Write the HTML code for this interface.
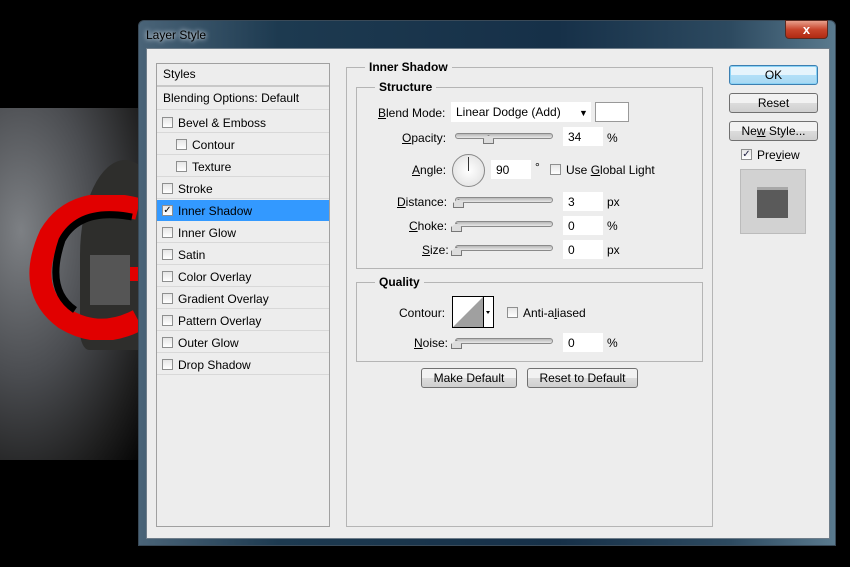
<!DOCTYPE html><html><head><style>
*{margin:0;padding:0;box-sizing:border-box}
body{width:850px;height:567px;overflow:hidden;background:#000;font-family:"Liberation Sans",sans-serif;font-size:12px;color:#000;position:relative}
.a{position:absolute}
.t{position:absolute;white-space:nowrap;line-height:14px}
.cb{position:absolute;width:11px;height:11px;border:1px solid #8e8f8f;background:linear-gradient(#e6e6e6,#fff)}
.row{position:absolute;left:157px;width:172px;height:22px;border-bottom:1px solid #d8d8d8}
.box{position:absolute;border:1px solid #b5b5b5}
.inp{position:absolute;background:#fff;height:19px;padding:3px 0 0 5px}
.sl{position:absolute;height:6px;width:98px;border:1px solid #8a8a8a;border-radius:3px;background:linear-gradient(#b8b8b8,#e8e8e8)}
.th{position:absolute;width:11px;height:9px;background:#ddd;border:1px solid #777;clip-path:polygon(50% 0,100% 45%,100% 100%,0 100%,0 45%)}
.btn{position:absolute;height:20px;border:1px solid #707070;border-radius:3px;background:linear-gradient(#f2f2f2 50%,#dcdcdc 50%,#cfcfcf);text-align:center;line-height:18px}
u{text-decoration:underline}
</style></head><body>
<div class="a" style="left:0;top:108px;width:140px;height:352px;background:radial-gradient(ellipse at 15% 35%,#7d8084,#4a4c50 45%,#1e1e1e 80%,#050505)"></div>
<div class="a" style="left:80px;top:160px;width:90px;height:190px;border-radius:50% 50% 10% 10%;background:#2e2e2c"></div>
<svg class="a" style="left:20px;top:195px" width="120" height="145"><path d="M118 14 Q55 -2 30 40 Q5 95 45 124 Q80 145 118 125" fill="none" stroke="#e10000" stroke-width="22"/><path d="M112 22 Q60 12 42 45 Q25 95 55 115" fill="none" stroke="#000" stroke-width="7"/><rect x="100" y="72" width="20" height="14" fill="#e10000"/><rect x="70" y="60" width="40" height="50" fill="#555"/></svg>
<div class="a" style="left:138px;top:20px;width:698px;height:526px;border:1px solid #3a4a58;border-radius:6px 6px 0 0;background:linear-gradient(90deg,#4a6478 0%,#1d3a50 20%,#163048 60%,#2d4a60 85%,#5a7a8e 100%)"></div>
<div class="t" style="left:146px;top:28px;color:#000;text-shadow:0 0 6px #cfd8e0,0 0 4px #cfd8e0">Layer Style</div>
<div class="a" style="left:785px;top:20px;width:43px;height:19px;border-radius:0 0 4px 4px;background:linear-gradient(#e8a08c,#c8452c 50%,#b02a12);border:1px solid #5a2a20;color:#fff;font-weight:bold;text-align:center;line-height:17px;font-size:13px">x</div>
<div class="a" style="left:146px;top:48px;width:684px;height:491px;background:#ededed;border:1px solid #6e7d8a"></div>
<div class="a" style="left:156px;top:63px;width:174px;height:464px;border:1px solid #a0a0a0;background:#ededed"></div>
<div class="row" style="top:64px;height:23px;border-bottom:2px solid #c8c8c8"></div><div class="t" style="left:163px;top:67px">Styles</div>
<div class="row" style="top:88px"></div><div class="t" style="left:163px;top:91px">Blending Options: Default</div>
<div class="a" style="left:157px;top:200px;width:172px;height:21px;background:#3399ff"></div>
<div class="row" style="top:111px"></div><div class="cb" style="left:162px;top:117px"></div><div class="t" style="left:178px;top:116px">Bevel &amp; Emboss</div>
<div class="row" style="top:133px"></div><div class="cb" style="left:176px;top:139px"></div><div class="t" style="left:192px;top:138px">Contour</div>
<div class="row" style="top:155px"></div><div class="cb" style="left:176px;top:161px"></div><div class="t" style="left:192px;top:160px">Texture</div>
<div class="row" style="top:177px"></div><div class="cb" style="left:162px;top:183px"></div><div class="t" style="left:178px;top:182px">Stroke</div>
<div class="cb" style="left:162px;top:205px;text-align:center;font-size:10px;line-height:9px">✓</div><div class="t" style="left:178px;top:204px">Inner Shadow</div>
<div class="row" style="top:221px"></div><div class="cb" style="left:162px;top:227px"></div><div class="t" style="left:178px;top:226px">Inner Glow</div>
<div class="row" style="top:243px"></div><div class="cb" style="left:162px;top:249px"></div><div class="t" style="left:178px;top:248px">Satin</div>
<div class="row" style="top:265px"></div><div class="cb" style="left:162px;top:271px"></div><div class="t" style="left:178px;top:270px">Color Overlay</div>
<div class="row" style="top:287px"></div><div class="cb" style="left:162px;top:293px"></div><div class="t" style="left:178px;top:292px">Gradient Overlay</div>
<div class="row" style="top:309px"></div><div class="cb" style="left:162px;top:315px"></div><div class="t" style="left:178px;top:314px">Pattern Overlay</div>
<div class="row" style="top:331px"></div><div class="cb" style="left:162px;top:337px"></div><div class="t" style="left:178px;top:336px">Outer Glow</div>
<div class="row" style="top:353px"></div><div class="cb" style="left:162px;top:359px"></div><div class="t" style="left:178px;top:358px">Drop Shadow</div>
<div class="box" style="left:346px;top:67px;width:367px;height:460px"></div>
<div class="t" style="left:365px;top:60px;background:#ededed;padding:0 4px;font-weight:bold">Inner Shadow</div>
<div class="box" style="left:356px;top:87px;width:347px;height:182px"></div>
<div class="t" style="left:375px;top:80px;background:#ededed;padding:0 4px;font-weight:bold">Structure</div>
<div class="t" style="left:378px;top:106px"><u>B</u>lend Mode:</div>
<div class="inp" style="left:451px;top:102px;width:140px;height:20px">Linear Dodge (Add)</div><div class="t" style="left:579px;top:106px;font-size:9px">▼</div>
<div class="a" style="left:595px;top:102px;width:34px;height:20px;background:#fff;border:1px solid #999"></div>
<div class="t" style="left:402px;top:131px"><u>O</u>pacity:</div><div class="sl" style="left:455px;top:133px"></div><div class="th" style="left:483px;top:135px"></div>
<div class="inp" style="left:563px;top:127px;width:40px">34</div><div class="t" style="left:607px;top:131px">%</div>
<div class="t" style="left:412px;top:163px"><u>A</u>ngle:</div>
<div class="a" style="left:452px;top:154px;width:33px;height:33px;border-radius:50%;border:1px solid #888;background:radial-gradient(#fff,#ddd)"></div>
<div class="a" style="left:468px;top:157px;width:1px;height:14px;background:#333"></div>
<div class="inp" style="left:491px;top:160px;width:40px">90</div><div class="t" style="left:535px;top:160px">°</div>
<div class="cb" style="left:550px;top:164px"></div><div class="t" style="left:566px;top:163px">Use <u>G</u>lobal Light</div>
<div class="t" style="left:397px;top:195px"><u>D</u>istance:</div><div class="sl" style="left:455px;top:197px"></div><div class="th" style="left:453px;top:199px"></div>
<div class="inp" style="left:563px;top:192px;width:40px">3</div><div class="t" style="left:607px;top:195px">px</div>
<div class="t" style="left:409px;top:219px"><u>C</u>hoke:</div><div class="sl" style="left:455px;top:221px"></div><div class="th" style="left:451px;top:223px"></div>
<div class="inp" style="left:563px;top:216px;width:40px">0</div><div class="t" style="left:607px;top:219px">%</div>
<div class="t" style="left:422px;top:243px"><u>S</u>ize:</div><div class="sl" style="left:455px;top:245px"></div><div class="th" style="left:451px;top:247px"></div>
<div class="inp" style="left:563px;top:240px;width:40px">0</div><div class="t" style="left:607px;top:243px">px</div>
<div class="box" style="left:356px;top:282px;width:347px;height:80px"></div>
<div class="t" style="left:375px;top:275px;background:#ededed;padding:0 4px;font-weight:bold">Quality</div>
<div class="t" style="left:399px;top:306px">Contour:</div>
<svg class="a" style="left:452px;top:296px" width="42" height="32"><rect x="0.5" y="0.5" width="41" height="31" fill="#fff" stroke="#000"/><path d="M1 31 L31 1 L31 31Z" fill="#a0a0a0"/><line x1="31.5" y1="1" x2="31.5" y2="31" stroke="#000"/><path d="M34 15 L38 15 L36 18Z" fill="#000"/></svg>
<div class="cb" style="left:507px;top:307px"></div><div class="t" style="left:523px;top:306px">Anti-a<u>l</u>iased</div>
<div class="t" style="left:414px;top:336px"><u>N</u>oise:</div><div class="sl" style="left:455px;top:338px"></div><div class="th" style="left:451px;top:340px"></div>
<div class="inp" style="left:563px;top:333px;width:40px">0</div><div class="t" style="left:607px;top:336px">%</div>
<div class="btn" style="left:421px;top:368px;width:96px">Make Default</div>
<div class="btn" style="left:527px;top:368px;width:111px">Reset to Default</div>
<div class="btn" style="left:729px;top:65px;width:89px;border-color:#3c7fb1;background:linear-gradient(#e5f4fc 50%,#b2e0f8 50%,#a8d8f2);box-shadow:inset 0 0 0 1px #8ad2f5">OK</div>
<div class="btn" style="left:729px;top:93px;width:89px">Reset</div>
<div class="btn" style="left:729px;top:121px;width:89px">Ne<u>w</u> Style...</div>
<div class="cb" style="left:741px;top:149px;text-align:center;font-size:10px;line-height:9px;color:#224">✓</div><div class="t" style="left:757px;top:148px">Pre<u>v</u>iew</div>
<div class="a" style="left:740px;top:169px;width:66px;height:65px;background:#d2d2d2;border:1px solid #bbb"></div>
<div class="a" style="left:757px;top:187px;width:31px;height:31px;background:#5a5a5a;border-top:3px solid #a8a8a8"></div>
</body></html>
